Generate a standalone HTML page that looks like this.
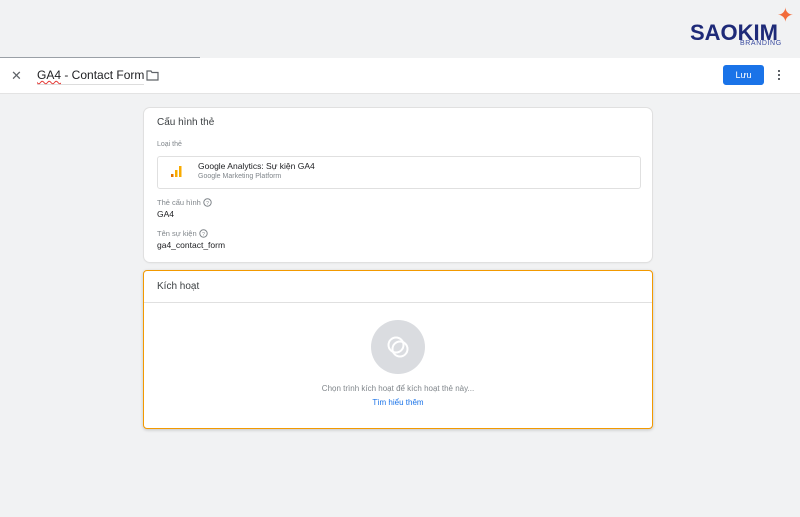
<!DOCTYPE html>
<html><head><meta charset="utf-8"><style>
body{margin:0;width:800px;height:517px;background:#f1f2f3;font-family:"Liberation Sans",Arial,sans-serif;position:relative;overflow:hidden;color:#202124}
.abs{position:absolute}
.card{position:absolute;background:#fff;border-radius:6px;box-shadow:0 0 0 1px #e0e0e0,0 1px 2px rgba(0,0,0,.08)}
</style></head><body>
<div class="abs" style="left:0;top:57px;width:200px;height:1px;background:#9aa0a6"></div>
<div class="abs" style="left:0;top:58px;width:800px;height:35px;background:#fff;border-bottom:1px solid #e3e3e3"></div>
<div class="abs" style="left:11px;top:68px;font-size:13px;color:#5f6368">✕</div>
<div class="abs" style="left:37px;top:68px;font-size:12px;color:#202124;border-bottom:1px solid #ddd;padding-bottom:2px;white-space:nowrap"><span style="text-decoration:underline wavy #e53935 1px">GA4</span> - Contact Form</div>
<svg class="abs" style="left:146px;top:70px" width="13" height="11" viewBox="0 0 13 11"><path d="M1 1h4l1 1.5h6v7.5H1z" fill="none" stroke="#5f6368" stroke-width="1.2"/></svg>
<div class="abs" style="left:723px;top:65px;width:41px;height:20px;background:#1a73e8;border-radius:3px;color:#fff;font-size:9px;text-align:center;line-height:20px">Lưu</div>
<div class="abs" style="left:778px;top:70px;width:2px;height:2px;background:#5f6368;box-shadow:0 4px #5f6368,0 8px #5f6368"></div>
<div class="abs" style="left:690px;top:20px;font-size:22px;font-weight:bold;color:#1e2a78;letter-spacing:0px">SAOKIM</div>
<div class="abs" style="left:740px;top:40px;font-size:7px;color:#3a4ca0;letter-spacing:0.6px">BRANDING</div>
<div class="abs" style="left:777px;top:3px;font-size:20px;color:#f26b3a">✦</div>
<div class="card" style="left:144px;top:108px;width:508px;height:154px"></div>
<div class="abs" style="left:157px;top:117px;font-size:10px;color:#3c4043">Cấu hình thẻ</div>
<div class="abs" style="left:157px;top:141px;font-size:7px;color:#80868b">Loại thẻ</div>
<div class="abs" style="left:157px;top:156px;width:482px;height:31px;border:1px solid #e0e0e0;border-radius:3px;background:#fff"></div>
<svg class="abs" style="left:171px;top:165px" width="12" height="13"><rect x="0" y="9" width="2.5" height="3" fill="#e37400"/><rect x="4" y="5" width="2.5" height="7" fill="#f9ab00"/><rect x="8" y="1" width="2.5" height="11" fill="#f9ab00"/></svg>
<div class="abs" style="left:198px;top:161px;font-size:8.5px;color:#202124">Google Analytics: Sự kiện GA4</div>
<div class="abs" style="left:198px;top:173px;font-size:7px;color:#80868b">Google Marketing Platform</div>
<div class="abs" style="left:157px;top:198px;font-size:7.5px;color:#80868b">Thẻ cấu hình</div>
<svg class="abs" style="left:203px;top:198px" width="9" height="9"><circle cx="4.5" cy="4.5" r="3.7" fill="none" stroke="#80868b" stroke-width="1"/><text x="4.5" y="7" font-size="5" text-anchor="middle" fill="#80868b" font-family="Liberation Sans">?</text></svg>
<div class="abs" style="left:157px;top:209px;font-size:8.5px">GA4</div>
<div class="abs" style="left:157px;top:229px;font-size:7.5px;color:#80868b">Tên sự kiện</div>
<svg class="abs" style="left:199px;top:229px" width="9" height="9"><circle cx="4.5" cy="4.5" r="3.7" fill="none" stroke="#80868b" stroke-width="1"/><text x="4.5" y="7" font-size="5" text-anchor="middle" fill="#80868b" font-family="Liberation Sans">?</text></svg>
<div class="abs" style="left:157px;top:240px;font-size:8.5px">ga4_contact_form</div>
<div class="abs" style="left:143px;top:270px;width:508px;height:157px;background:#fff;border:1px solid #f29900;border-radius:4px;box-shadow:0 1px 3px rgba(0,0,0,.2)"></div>
<div class="abs" style="left:157px;top:281px;font-size:10px;color:#3c4043">Kích hoạt</div>
<div class="abs" style="left:144px;top:302px;width:508px;height:1px;background:#e0e0e0"></div>
<div class="abs" style="left:371px;top:320px;width:54px;height:54px;border-radius:50%;background:#dadce0"></div>
<svg class="abs" style="left:384px;top:333px" width="28" height="28"><circle cx="12" cy="12" r="7.5" fill="none" stroke="#fff" stroke-width="2"/><circle cx="16" cy="16" r="7.5" fill="none" stroke="#fff" stroke-width="2"/></svg>
<div class="abs" style="left:280px;top:384px;width:236px;text-align:center;font-size:8px;color:#80868b">Chọn trình kích hoạt để kích hoạt thẻ này...</div>
<div class="abs" style="left:300px;top:398px;width:196px;text-align:center;font-size:8px;color:#1a73e8">Tìm hiểu thêm</div>
</body></html>
